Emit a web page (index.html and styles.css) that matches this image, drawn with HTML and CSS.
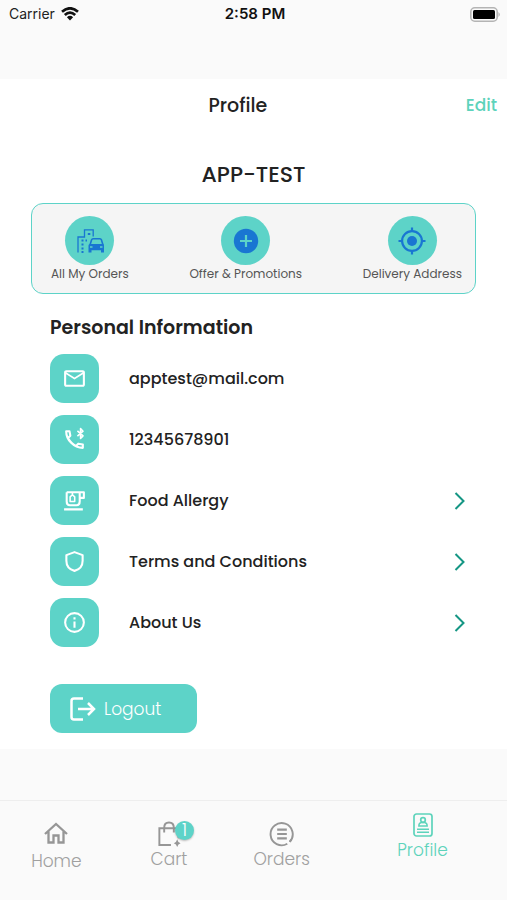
FILE: index.html
```html
<!DOCTYPE html>
<html lang="en">
<head>
<meta charset="utf-8">
<meta name="viewport" content="width=device-width, initial-scale=1">
<title>Profile</title>
<link rel="stylesheet" href="styles.css">
</head>
<body>
<div class="status">
  <span class="carrier">Carrier
    <svg width="18" height="14" viewBox="0 0 18 14" aria-hidden="true"><g fill="none" stroke="#111" stroke-width="2.700"><path d="M1 4.800Q9-2.200 17 4.800"/><path d="M3.800 8Q9 3.200 14.200 8"/></g><path d="M5.900 10.200Q9 7.400 12.100 10.200L9 13.500Z" fill="#111"/></svg>
  </span>
  <span class="time">2:58 PM</span>
  <span class="battery"><svg width="31" height="15" viewBox="0 0 31 15" aria-hidden="true"><rect x=".8" y=".8" width="26.400" height="13.400" rx="4" fill="none" stroke="#b4b4b4" stroke-width="1.600"/><rect x="3" y="3" width="22" height="9" rx="1.500" fill="#000"/><path d="M28.500 5Q31 7.500 28.500 10Z" fill="#aaa"/></svg></span>
</div>
<main class="page">
  <header class="bar">
    <h1 class="title">Profile</h1>
    <a class="edit" href="#edit">Edit</a>
  </header>
  <h2 class="name">APP-TEST</h2>
  <section class="shortcuts">
    <a class="shortcut" href="#my-orders">
      <span class="disc"><svg width="28" height="28" viewBox="0 0 28 28" fill="none" stroke="#1976d2" stroke-width="1.300" aria-hidden="true"><path d="M2 25.500V10H8.500V2.800H17.200V9.500"/><path d="M5.500 13.500h2M5.500 17.500h2M5.500 21.500h2M5.500 25h2M9.500 13.500h1.500M11.800 7h2.500" stroke-width="2"/><path d="M14 18l1.600-5.200Q16 11.800 17 11.800h7Q25 11.800 25.400 12.800L27 18" stroke-width="1.600"/><path d="M12.500 18.500Q12.500 17 14 17h13Q28 17 28 18.500V25.500h-3v-2.300h-9.500v2.300h-3Z" fill="#1976d2" stroke="none"/><path d="M14 20h2.500M24 20h2.500" stroke="#5dd3c8" stroke-width="1.600"/></svg></span>
      <span>All My Orders</span>
    </a>
    <a class="shortcut" href="#offers">
      <span class="disc"><svg width="28" height="28" viewBox="0 0 28 28" aria-hidden="true"><circle cx="14" cy="14" r="12.200" fill="#1976d2"/><path d="M14 8v12M8 14h12" stroke="#5dd3c8" stroke-width="2.200"/></svg></span>
      <span>Offer &amp; Promotions</span>
    </a>
    <a class="shortcut" href="#address">
      <span class="disc"><svg width="28" height="28" viewBox="0 0 28 28" fill="none" stroke="#1976d2" stroke-width="2.200" aria-hidden="true"><circle cx="14" cy="14" r="9.900"/><circle cx="14" cy="14" r="5" fill="#1976d2" stroke="none"/><path d="M14 .5v4M14 23.500v4M.5 14h4M23.500 14h4"/></svg></span>
      <span>Delivery Address</span>
    </a>
  </section>
  <section class="info">
    <h2 class="heading">Personal Information</h2>
    <ul class="rows">
      <li class="row">
        <span class="tile"><svg width="25" height="25" viewBox="0 0 24 24" fill="#fff" aria-hidden="true"><path d="M22 6c0-1.100-.9-2-2-2H4c-1.100 0-2 .9-2 2v12c0 1.100.9 2 2 2h16c1.100 0 2-.9 2-2V6zm-2 0l-8 5-8-5h16zm0 12H4V8l8 5 8-5v10z"/></svg></span>
        <span class="label">apptest@mail.com</span>
      </li>
      <li class="row">
        <span class="tile"><svg width="25" height="25" viewBox="0 0 24 24" fill="none" stroke="#fff" stroke-width="2" stroke-linejoin="round" aria-hidden="true"><path d="M4 4H7.200L8 8.400 5.800 10.500Q8.800 16 13.500 18.200L15.600 16 20 16.800V20Q13.500 20 8.800 15.200Q4 10.500 4 4Z"/><path d="M14.800 3.800l5.400 4.700-2.400 2.500V1.500L20.200 4l-5.400 4.700" stroke-width="1.500"/></svg></span>
        <span class="label">12345678901</span>
      </li>
      <li><a class="row" href="#allergy">
        <span class="tile"><svg width="25" height="25" viewBox="0 0 24 24" fill="none" stroke="#fff" stroke-width="2" stroke-linejoin="round" aria-hidden="true"><path d="M4.500 4H21V9.500H17M17 4v9Q17 16.500 14 16.500H7.500Q4.500 16.500 4.500 13V4M2 20.500H20"/><path d="M10 4v2.500M7.800 8.500L10 6.500l2.200 2v4.500h-4.400Z" stroke-width="1.500"/></svg></span>
        <span class="label">Food Allergy</span>
        <svg class="chevron" width="12" height="18" viewBox="0 0 12 18" aria-hidden="true"><path d="M1.500 1L9.500 9l-8 8"/></svg>
      </a></li>
      <li><a class="row" href="#terms">
        <span class="tile"><svg width="25" height="25" viewBox="0 0 24 24" fill="none" stroke="#fff" stroke-width="2" stroke-linejoin="round" aria-hidden="true"><path d="M12 3l7.800 2.900v5.300c0 4.500-2.600 8.300-7.800 9.800-5.200-1.500-7.800-5.300-7.800-9.800V5.900Z"/></svg></span>
        <span class="label">Terms and Conditions</span>
        <svg class="chevron" width="12" height="18" viewBox="0 0 12 18" aria-hidden="true"><path d="M1.500 1L9.500 9l-8 8"/></svg>
      </a></li>
      <li><a class="row" href="#about">
        <span class="tile"><svg width="25" height="25" viewBox="0 0 24 24" fill="none" stroke="#fff" stroke-width="2" aria-hidden="true"><circle cx="12" cy="12" r="9"/><path d="M12 11v6M12 7v2"/></svg></span>
        <span class="label">About Us</span>
        <svg class="chevron" width="12" height="18" viewBox="0 0 12 18" aria-hidden="true"><path d="M1.500 1L9.500 9l-8 8"/></svg>
      </a></li>
    </ul>
    <button class="logout" type="button">
      <svg width="26" height="24" viewBox="0 0 26 24" fill="none" stroke="#fff" stroke-width="2.500" aria-hidden="true"><path d="M13 1.500H4Q1.500 1.500 1.500 4V20Q1.500 22.500 4 22.500H13M8 12H24M18 6L24 12 18 18"/></svg>
      Logout
    </button>
  </section>
</main>
<nav class="tabs">
  <a class="tab tab-home" href="#home">
    <svg width="26" height="24" viewBox="0 0 26 24" fill="none" stroke="#969696" stroke-width="2.300" aria-hidden="true"><path d="M2 13L13 3l11 10M5.500 10.500v11h5v-7h5v7h5v-11"/></svg>
    Home
  </a>
  <a class="tab" href="#cart">
    <span class="bag">
      <svg width="24" height="26" viewBox="0 0 24 27" fill="none" stroke="#969696" stroke-width="2" aria-hidden="true"><path d="M14 25H2V7.500H22V18M7 12V7Q7 1.500 12 1.500T17 7v5"/><path d="M20.500 19l1.300 2.700L24 23l-2.200 1.300L20.500 27l-1.300-2.700L17 23l2.200-1.300Z" fill="#969696" stroke="none"/></svg>
      <span class="badge">1</span>
    </span>
    Cart
  </a>
  <a class="tab" href="#orders">
    <svg width="26" height="26" viewBox="0 0 26 27" fill="none" stroke="#969696" stroke-width="2" aria-hidden="true"><path d="M21 21.600A11.500 11.500 0 1 0 18.500 23.600"/><path d="M22.500 19.500l-1.500 2.100"/><path d="M8 9h10M8 13.500h10M8 18h10" stroke-width="2.200"/></svg>
    Orders
  </a>
  <a class="tab tab-profile" href="#profile" aria-current="page">
    <svg width="20" height="24" viewBox="0 0 20 24" fill="none" stroke="#5dd3bb" stroke-width="1.700" aria-hidden="true"><rect x="1" y="1" width="18" height="22" rx="2.500"/><circle cx="10" cy="7" r="2.300"/><path d="M5.800 13Q5.800 9.800 8.500 9.500h3Q14.200 9.800 14.200 13ZM4 16.200h12M4 19.300h12" stroke-width="1.400"/></svg>
    Profile
  </a>
</nav>
</body>
</html>
```
FILE: styles.css
```css
* { box-sizing: border-box; }
body {
  margin: 0;
  min-height: 100vh;
  display: flex;
  flex-direction: column;
  background: #fafafa;
  color: #222;
  font-family: Poppins, Inter, sans-serif;
}
a { color: inherit; text-decoration: none; }
h1, h2, ul { margin: 0; padding: 0; list-style: none; }
svg { display: block; flex: none; }

.status {
  display: grid;
  grid-template-columns: 1fr auto 1fr;
  align-items: center;
  height: 27px;
  padding: 0 6px 0 9px;
  margin-bottom: 52px;
  font-family: Inter, sans-serif;
  font-size: 14px;
  line-height: 28px;
}
.carrier { display: flex; align-items: center; gap: 6px; }
.time { font-size: 15px; font-weight: 600; color: #111; }
.battery { justify-self: end; }

.page { background: #fff; padding-bottom: 16px; }
.bar {
  display: flex;
  align-items: center;
  height: 52px;
  padding: 0 10px;
}
.title { flex: 1; text-align: center; font-size: 19px; font-weight: 500; }
.edit { color: #5dd3bb; font-size: 17px; font-weight: 500; }
.name {
  margin: 28px 0 12px;
  text-align: center;
  font-size: 22px;
  font-weight: 500;
  line-height: 32px;
}

.shortcuts {
  display: flex;
  justify-content: space-between;
  margin: 0 31px;
  padding: 12px 13px 10px 19px;
  border: 1px solid #5dd3c8;
  border-radius: 12px;
  background: #f5f5f5;
}
.shortcut {
  display: flex;
  flex-direction: column;
  align-items: center;
  color: #555;
  font-size: 12px;
  line-height: 18px;
}
.disc, .tile {
  display: grid;
  place-items: center;
  width: 49px;
  height: 49px;
  background: #5dd3c8;
}
.disc { border-radius: 50%; }
.tile { border-radius: 14px; }

.info { padding: 20px 41px 0 50px; }
.heading { font-size: 19px; font-weight: 600; line-height: 28px; }
.rows { display: grid; gap: 12px; margin: 12px 0 37px; }
.row { display: flex; align-items: center; gap: 30px; }
.label { flex: 1; font-size: 16px; font-weight: 500; }
.chevron { fill: none; stroke: #159684; stroke-width: 2; }
.logout {
  display: flex;
  align-items: center;
  gap: 8px;
  width: 147px;
  height: 49px;
  padding: 0 20px;
  border: 0;
  border-radius: 12px;
  background: #5dd3c8;
  color: #fff;
  font: 300 17px Poppins, Inter, sans-serif;
}

.tabs {
  display: flex;
  margin-top: auto;
  height: 100px;
  border-top: 1px solid #eee;
  color: #a0a0a0;
  font-size: 17px;
  font-weight: 300;
  line-height: 24px;
}
.tab {
  flex: 2;
  display: flex;
  flex-direction: column;
  align-items: center;
  padding-top: 20px;
}
.tab-home { gap: 4px; }
.tab-profile { flex: 3; padding-top: 12px; gap: 1px; color: #5dd3bb; }
.bag { position: relative; }
.badge {
  position: absolute;
  top: 0;
  left: 18px;
  width: 19px;
  height: 19px;
  border-radius: 50%;
  background: #5dd3c8;
  box-shadow: 0 1px 2px #0004;
  color: #fff;
  font-size: 17px;
  line-height: 19px;
  text-align: center;
}
```
